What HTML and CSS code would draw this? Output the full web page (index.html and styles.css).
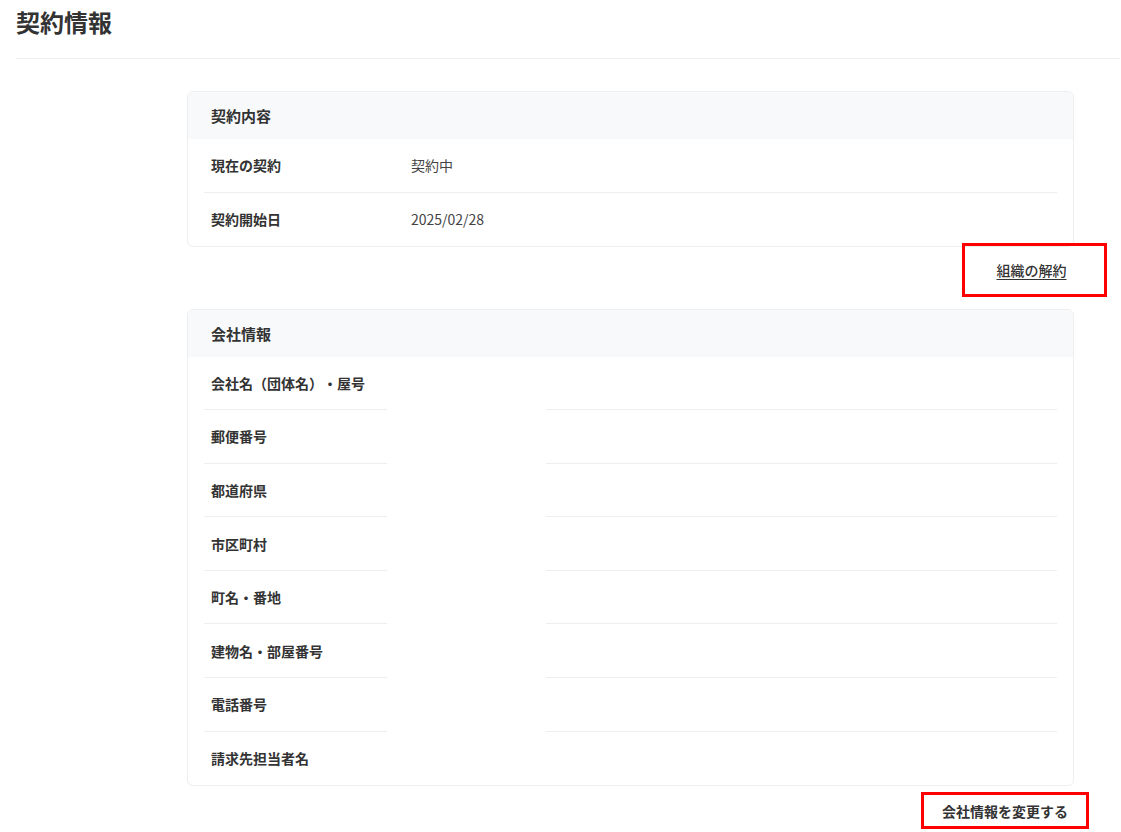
FILE: index.html
```html
<!DOCTYPE html>
<html lang="ja">
<head>
    <meta charset="UTF-8">
    <meta name="viewport" content="width=device-width, initial-scale=1.0">
	<title>契約情報</title>
	<link rel="stylesheet" href="styles.css">
</head>
<body>
	<div class="page">
		<h1 class="page-title">契約情報</h1>
		<div class="content">
			<section class="card">
				<div class="card-header">契約内容</div>
				<div class="card-body">
					<div class="row">
						<div class="label">現在の契約</div>
						<div class="value">契約中</div>
					</div>
					<div class="row">
						<div class="label">契約開始日</div>
						<div class="value">2025/02/28</div>
					</div>
				</div>
			</section>
			<div class="actions">
				<a class="link-cancel mark" href="#">組織の解約</a>
			</div>
			<section class="card">
				<div class="card-header">会社情報</div>
				<div class="card-body">
					<div class="split-row"><div class="label">会社名（団体名）・屋号</div><div></div><div class="value"></div></div>
					<div class="split-row"><div class="label">郵便番号</div><div></div><div class="value"></div></div>
					<div class="split-row"><div class="label">都道府県</div><div></div><div class="value"></div></div>
					<div class="split-row"><div class="label">市区町村</div><div></div><div class="value"></div></div>
					<div class="split-row"><div class="label">町名・番地</div><div></div><div class="value"></div></div>
					<div class="split-row"><div class="label">建物名・部屋番号</div><div></div><div class="value"></div></div>
					<div class="split-row"><div class="label">電話番号</div><div></div><div class="value"></div></div>
					<div class="split-row"><div class="label">請求先担当者名</div><div></div><div class="value"></div></div>
				</div>
			</section>
			<div class="actions">
				<a class="btn-edit mark" href="#">会社情報を変更する</a>
			</div>
		</div>
	</div>
</body>
</html>
```

FILE: styles.css
```css
body {
	margin: 0;
	font-family: "Noto Sans CJK JP", "Noto Sans", sans-serif;
	color: #333;
	background: #fff;
	text-spacing-trim: space-all;
}
.page {
	padding: 0 1px 0 16px;
}
.page-title {
	margin: 0;
	padding: 6px 0 20px;
	font-size: 24px;
	line-height: 32px;
	font-weight: 700;
	border-bottom: 1px solid #eeeeee;
}
.content {
	width: 887px;
	margin: 32px 0 0 171px;
}
.card {
	border: 1px solid #edeef0;
	border-radius: 6px;
	overflow: hidden;
}
.card-header {
	background: #f8f9fa;
	height: 47px;
	line-height: 47px;
	padding: 0 23px;
	font-size: 15px;
	font-weight: 700;
}
.card-body {
	padding: 0 16px;
}
.row {
	display: flex;
	height: 52.75px;
	align-items: center;
	border-bottom: 1px solid #eeeeee;
	font-size: 14px;
}
.row:last-child {
	border-bottom: none;
}
.row .label {
	width: 200px;
}
.label {
	padding-left: 7px;
	font-weight: 700;
}
.value {
	color: #444;
}
.split-row {
	display: grid;
	grid-template-columns: 183px 159px 1fr;
	height: 53.6px;
	font-size: 14px;
}
.split-row > div {
	display: flex;
	align-items: center;
}
.split-row .label,
.split-row .value {
	border-bottom: 1px solid #eeeeee;
}
.split-row:last-child .label,
.split-row:last-child .value {
	border-bottom: none;
}
.actions {
	display: flex;
	justify-content: flex-end;
}
.mark {
	border: 3px solid #ff0000;
	box-sizing: border-box;
	display: flex;
	align-items: center;
	justify-content: center;
	color: #333;
	font-size: 14px;
}
.link-cancel {
	width: 145px;
	height: 54px;
	padding-right: 6px;
	margin: -4px -33px 12px 0;
	font-weight: 500;
	text-decoration: underline;
	text-underline-offset: 3px;
}
.btn-edit {
	width: 168px;
	height: 37px;
	margin: 6px -15px 0 0;
	font-weight: 700;
	text-decoration: none;
}
```
